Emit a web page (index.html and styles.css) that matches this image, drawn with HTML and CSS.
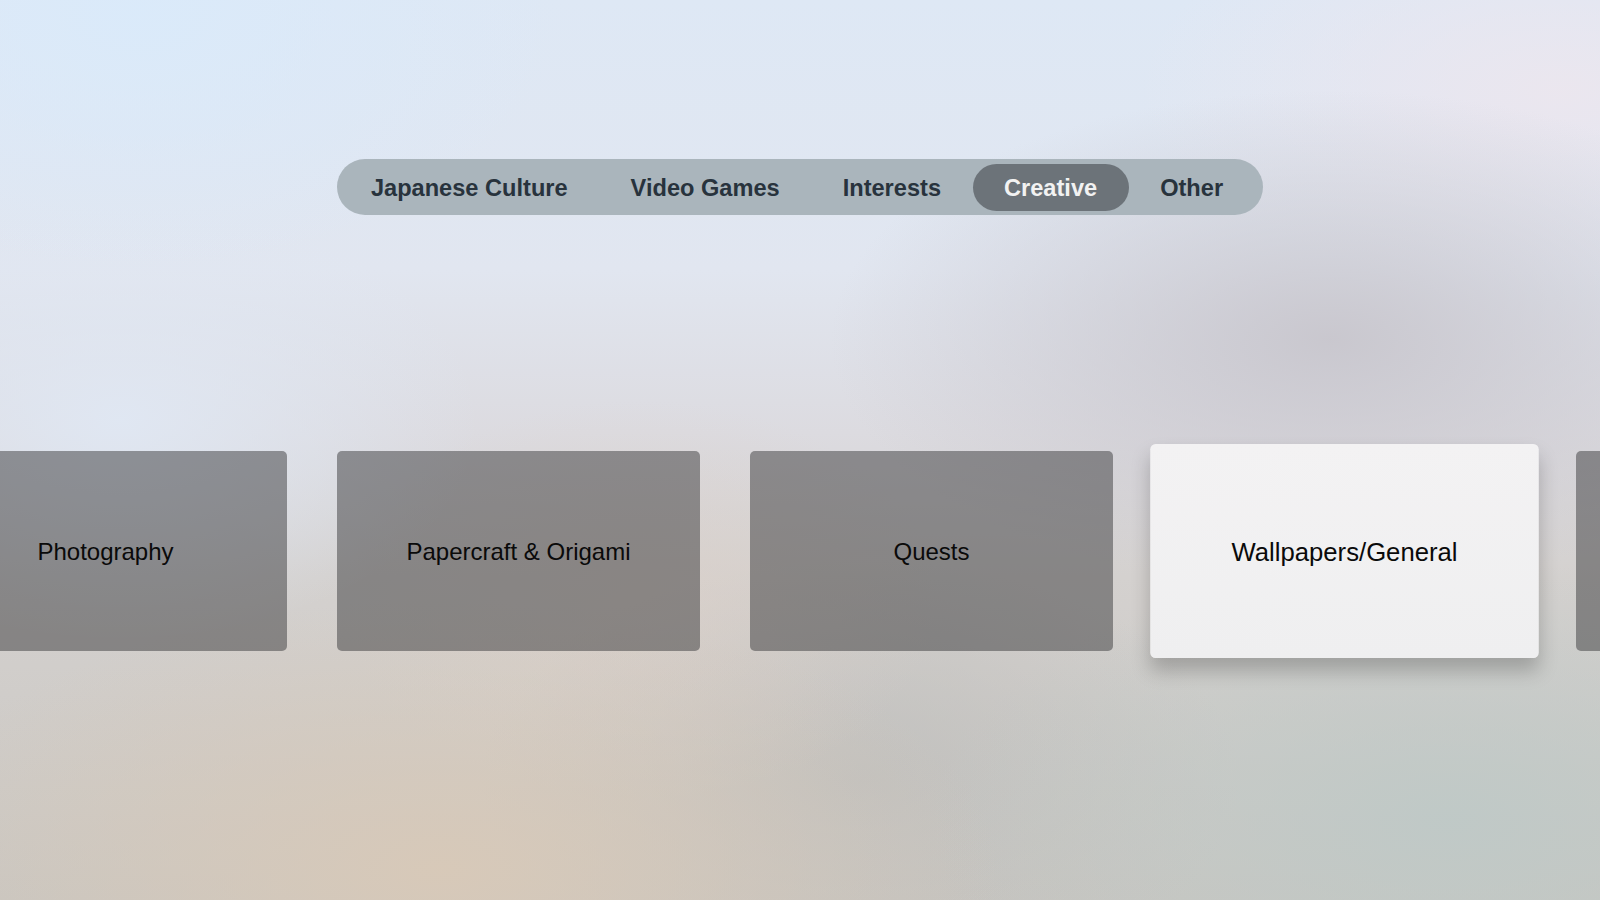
FILE: index.html
```html
<!DOCTYPE html>
<html lang="en">
<head>
<meta charset="utf-8">
<title>Categories</title>
<link rel="stylesheet" href="styles.css">
</head>
<body>
<div class="screen">
  <nav class="tabbar">
    <div class="tab">Japanese Culture</div>
    <div class="tab">Video Games</div>
    <div class="tab">Interests</div>
    <div class="tab tab-active">Creative</div>
    <div class="tab">Other</div>
  </nav>
  <div class="shelf">
    <div class="card">Photography</div>
    <div class="card">Papercraft &amp; Origami</div>
    <div class="card">Quests</div>
    <div class="card card-focused">Wallpapers/General</div>
    <div class="card"></div>
  </div>
</div>
</body>
</html>
```
FILE: styles.css
```css
html, body {
  margin: 0;
  padding: 0;
}
body {
  width: 1600px;
  height: 900px;
  overflow: hidden;
  font-family: "Liberation Sans", Arial, sans-serif;
}
.screen {
  width: 1600px;
  height: 900px;
  overflow: hidden;
  display: flex;
  flex-direction: column;
  align-items: center;
  background:
    radial-gradient(ellipse 420px 260px at 140px 10px, rgba(218,234,250,0.95), rgba(218,234,250,0) 100%),
    radial-gradient(ellipse 500px 250px at 1330px 340px, rgba(200,198,205,0.95), rgba(200,198,205,0) 100%),
    radial-gradient(ellipse 420px 200px at 1560px 90px, rgba(236,230,238,0.9), rgba(236,230,238,0) 100%),
    radial-gradient(ellipse 360px 220px at 120px 420px, rgba(224,232,244,0.9), rgba(224,232,244,0) 100%),
    radial-gradient(ellipse 560px 270px at 440px 870px, rgba(216,201,184,0.95), rgba(216,201,184,0) 100%),
    radial-gradient(ellipse 300px 200px at 640px 600px, rgba(220,208,200,0.6), rgba(220,208,200,0) 100%),
    radial-gradient(ellipse 520px 260px at 1450px 820px, rgba(190,201,199,0.9), rgba(190,201,199,0) 100%),
    radial-gradient(ellipse 380px 220px at 860px 780px, rgba(190,190,188,0.8), rgba(190,190,188,0) 100%),
    linear-gradient(to bottom, #dee8f5 0%, #e1e6f0 30%, #dcdbe0 48%, #d4d1cf 64%, #c9c6c1 100%);
}
.tabbar {
  margin-top: 159px;
  height: 56px;
  box-sizing: border-box;
  padding: 0 8px 0 2px;
  display: flex;
  align-items: center;
  background: #aab5bc;
  border-radius: 28px;
}
.tab {
  box-sizing: border-box;
  height: 47px;
  line-height: 46px;
  padding: 1px 31.5px 0;
  font-size: 23.6px;
  font-weight: 700;
  color: #28333d;
  border-radius: 24px;
  white-space: nowrap;
}
.tab-active {
  background: #6c7379;
  color: #f2f2f2;
}
.shelf {
  align-self: flex-start;
  margin-top: 236px;
  margin-left: -76px;
  display: flex;
  gap: 50px;
}
.card {
  box-sizing: border-box;
  flex: 0 0 363px;
  height: 200px;
  padding-top: 2px;
  border-radius: 5px;
  background: rgba(58,58,60,0.5);
  display: flex;
  align-items: center;
  justify-content: center;
  font-size: 24px;
  color: #0a0a0a;
}
.card-focused {
  background: linear-gradient(to bottom, #f3f2f3, #efeff0);
  transform: scale(1.07);
  box-shadow: 0 12px 18px rgba(0,0,0,0.22);
}
```
